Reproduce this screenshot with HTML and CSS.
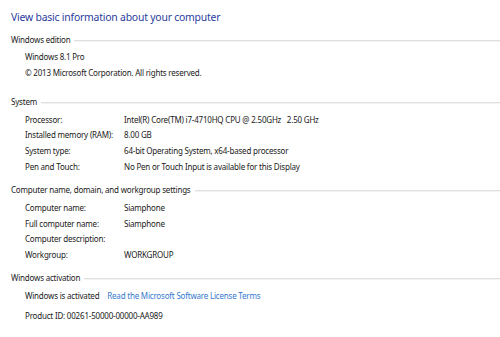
FILE: index.html
```html
<!DOCTYPE html>
<html lang="en">
<head>
  <meta charset="UTF-8" />
  <title>System</title>
  <link rel="stylesheet" href="styles.css">
</head>
<body>
  <h1 class="title">View basic information about your computer</h1>

  <div class="group edition">
    <div class="group-head"><span>Windows edition</span></div>
    <div class="rows">
      <div class="full">Windows 8.1 Pro</div>
      <div class="full">© 2013 Microsoft Corporation. All rights reserved.</div>
    </div>
  </div>

  <div class="group">
    <div class="group-head"><span>System</span></div>
    <div class="rows">
      <div>Processor:</div><div>Intel(R) Core(TM) i7-4710HQ CPU @ 2.50GHz &nbsp; 2.50 GHz</div>
      <div>Installed memory (RAM):</div><div>8.00 GB</div>
      <div>System type:</div><div>64-bit Operating System, x64-based processor</div>
      <div>Pen and Touch:</div><div>No Pen or Touch Input is available for this Display</div>
    </div>
  </div>

  <div class="group">
    <div class="group-head"><span>Computer name, domain, and workgroup settings</span></div>
    <div class="rows">
      <div>Computer name:</div><div>Siamphone</div>
      <div>Full computer name:</div><div>Siamphone</div>
      <div>Computer description:</div><div></div>
      <div>Workgroup:</div><div>WORKGROUP</div>
    </div>
  </div>

  <div class="group">
    <div class="group-head"><span>Windows activation</span></div>
    <div class="rows activation">
      <div class="full">Windows is activated <a href="#" class="link">Read the Microsoft Software License Terms</a></div>
      <div class="full">Product ID: 00261-50000-00000-AA989</div>
    </div>
  </div>
</body>
</html>
```

FILE: styles.css
```css
body {
  margin: 0;
  padding: 0 0 0 11px;
  font-family: "Noto Sans", "Open Sans", sans-serif;
  font-size: 8px;
  letter-spacing: -0.2px;
  color: #1a1a1a;
  background: #fff;
}

.title {
  margin: 9px 0 7px;
  font-size: 10.4px;
  font-weight: normal;
  line-height: 16px;
  color: #2a3c9e;
}

.group {
  margin-bottom: 8px;
}

.group.edition {
  margin-bottom: 14px;
}

.group-head {
  display: flex;
  align-items: center;
  height: 14px;
  margin-bottom: 3px;
}

.group-head::after {
  content: "";
  flex: 1;
  height: 1px;
  margin: 2px 0 0 4px;
  background: #e0e0e0;
  box-shadow: 0 1px 0 #f3f3f3;
}

.rows {
  display: grid;
  grid-template-columns: 99px 1fr;
  padding-left: 14px;
  line-height: 15.8px;
}

.rows .full {
  grid-column: 1 / 3;
}

.rows.activation {
  line-height: 20px;
  margin-top: -2px;
}

.link {
  margin-left: 6px;
  color: #3478cf;
  text-decoration: none;
}
```
